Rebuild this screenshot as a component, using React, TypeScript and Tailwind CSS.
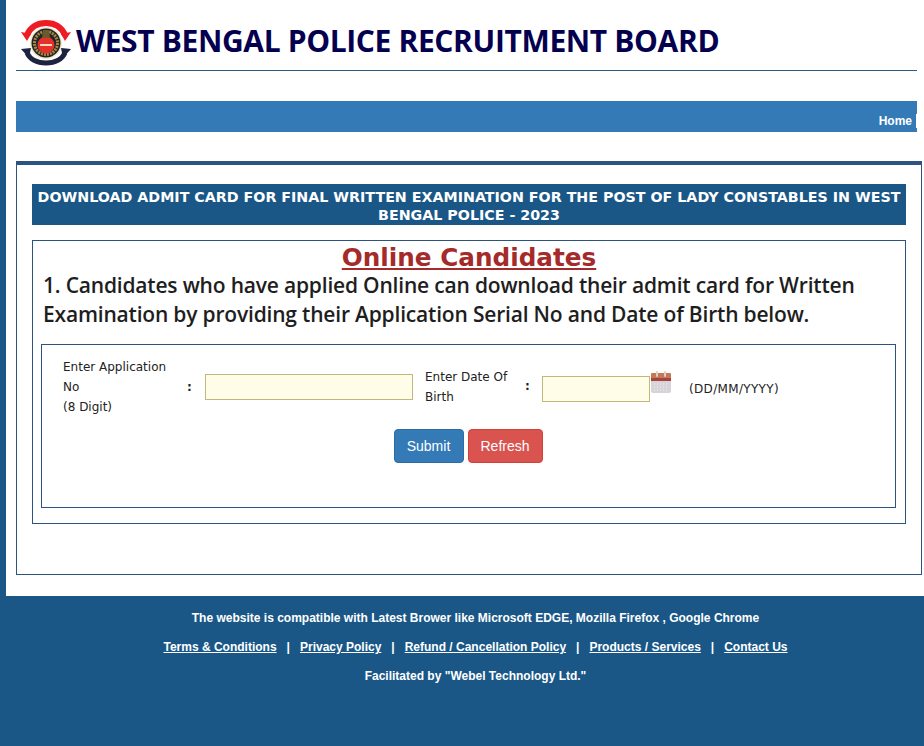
import React from 'react'

const Logo = () => (
  <svg width="54" height="48" viewBox="0 0 54 48" className="shrink-0">
    {/* red ribbon with arrow heads */}
    <path d="M7 17 C11 8 18 5 26 5 C34 5 41 8 45 17" fill="none" stroke="#ee1c25" strokeWidth="6" />
    <path d="M1 14 L11 16 L7 23 Z" fill="#ee1c25" />
    <path d="M51 14 L41 16 L45 23 Z" fill="#ee1c25" />
    {/* dark ribbon with arrow heads */}
    <path d="M7 35 C11 43 18 45 26 45 C34 45 41 43 45 35" fill="none" stroke="#1d2440" strokeWidth="5" />
    <path d="M1 31 L11 30 L9 40 Z" fill="#1d2440" />
    <path d="M51 31 L41 30 L43 40 Z" fill="#1d2440" />
    <circle cx="26" cy="25" r="16" fill="#f4e7c4" />
    <circle cx="26" cy="25" r="14.5" fill="#23232e" />
    <circle cx="26" cy="25" r="11.5" fill="none" stroke="#a98a3a" strokeWidth="3" strokeDasharray="2 1" />
    <circle cx="26" cy="27" r="8.5" fill="#e8302a" />
    <path d="M23 12 h6 l1 8 h-8 z" fill="#6b5a2c" />
    <rect x="20" y="26" width="12" height="2" fill="#f6d9c0" />
  </svg>
)

const CalendarIcon = () => (
  <svg width="22" height="23" viewBox="0 0 22 23" className="shrink-0">
    <rect x="1" y="2" width="20" height="20" rx="2" fill="#d6d4d6" />
    <rect x="1" y="2" width="20" height="8" rx="1" fill="#c77755" />
    <rect x="1" y="7" width="20" height="3" fill="#a5443f" />
    <rect x="6" y="0" width="2" height="6" rx="1" fill="#d8d0c4" />
    <rect x="14" y="0" width="2" height="6" rx="1" fill="#d8d0c4" />
    <path d="M4 13h14M4 16h14M4 19h14" stroke="#f2f2f2" strokeWidth="1" strokeDasharray="1 2" />
  </svg>
)

const footerLinks = [
  'Terms & Conditions',
  'Privacy Policy',
  'Refund / Cancellation Policy',
  'Products / Services',
  'Contact Us',
]

const App = () => {
  return (
    <div className="w-[924px] h-[746px] overflow-hidden bg-white font-['Liberation_Sans',sans-serif]">
      <div className="h-[596px] border-l-[6px] border-[#1a5787] pl-2.5 overflow-hidden">
        {/* Header */}
        <div className="w-[901px] h-[71px] border-b border-[#2b5a82] pt-[18px] flex items-start pl-[4px]">
          <Logo />
          <h1 className="ml-[2px] mt-[3px] text-[30px] leading-[40px] tracking-[-0.36px] font-bold text-[#04004f] whitespace-nowrap font-['Open_Sans',sans-serif]">
            WEST BENGAL POLICE RECRUITMENT BOARD
          </h1>
        </div>

        {/* Nav */}
        <div className="w-[901px] h-[31px] mt-[30px] bg-[#337ab7] flex items-end justify-end pb-[4px]">
          <a className="block text-xs leading-[14px] font-bold text-white pr-[4px] border-r border-white">Home</a>
        </div>

        {/* Main panel */}
        <div className="w-[906px] h-[414px] mt-[29px] border border-t-4 border-[#2b5480] px-[15px] pt-[19px]">
          <div className="w-[874px] h-[41px] bg-[#1a5787] text-center font-bold text-white text-[14.25px] leading-[18px] pt-[4px] font-['DejaVu_Sans',sans-serif]">
            DOWNLOAD ADMIT CARD FOR FINAL WRITTEN EXAMINATION FOR THE POST OF LADY CONSTABLES IN WEST BENGAL POLICE - 2023
          </div>

          <div className="w-[874px] h-[284px] mt-[15px] border border-[#2b5480] px-2">
            <h2 className="mt-[2px] text-center text-[24.7px] leading-[30px] font-bold text-[#a52a2a] underline font-['DejaVu_Sans',sans-serif]">
              Online Candidates
            </h2>
            <p className="-mt-[2px] pl-[2px] text-[21px] leading-[29px] tracking-[-0.19px] font-semibold text-[#1e1e1e] font-['Open_Sans',sans-serif]">
              1. Candidates who have applied Online can download their admit card for Written Examination by providing their Application Serial No and Date of Birth below.
            </p>

            <div className="w-[855px] h-[164px] mt-[15px] border border-[#2b5480] text-[12px] leading-[20px] text-[#222] font-['DejaVu_Sans',sans-serif]">
              <div className="flex items-center pt-[12px] pl-[21px]">
                <div className="w-[124px]">
                  Enter Application<br />No<br />(8 Digit)
                </div>
                <span className="w-[18px] font-bold">:</span>
                <input className="w-[208px] h-[26px] bg-[#fffde8] bg-[radial-gradient(#ece8cf_0.6px,transparent_0.7px)] bg-[length:6px_6px] border border-[#c2b77c]" />
                <div className="w-[100px] ml-[12px]">
                  Enter Date Of<br />Birth
                </div>
                <span className="w-[17px] -mt-[2px] font-bold">:</span>
                <input className="w-[108px] h-[26px] mt-[3px] bg-[#fffde8] bg-[radial-gradient(#ece8cf_0.6px,transparent_0.7px)] bg-[length:6px_6px] border border-[#c2b77c]" />
                <div className="-mt-[9px]">
                  <CalendarIcon />
                </div>
                <span className="ml-[17px] mt-[4px] tracking-[0.33px]">(DD/MM/YYYY)</span>
              </div>
              <div className="flex justify-center gap-1 mt-[12px] -ml-[1px]">
                <button className="w-[70px] h-[34px] rounded bg-[#337ab7] border border-[#2e6da4] text-white text-sm font-['Liberation_Sans',sans-serif]">
                  Submit
                </button>
                <button className="w-[75px] h-[34px] rounded bg-[#d9534f] border border-[#d43f3a] text-white text-sm font-['Liberation_Sans',sans-serif]">
                  Refresh
                </button>
              </div>
            </div>
          </div>
        </div>
      </div>

      {/* Footer */}
      <div className="h-[150px] bg-[#1a5787] text-white text-xs font-bold text-center pt-[14px] pl-[27px]">
        <p className="leading-[16px]">The website is compatible with Latest Brower like Microsoft EDGE, Mozilla Firefox , Google Chrome</p>
        <p className="mt-[13px] leading-[16px] flex justify-center">
          {footerLinks.map((link, i) => (
            <span key={link}>
              {i > 0 && <span className="mx-[10px]">|</span>}
              <a className="underline">{link}</a>
            </span>
          ))}
        </p>
        <p className="mt-[13px] leading-[16px]">Facilitated by "Webel Technology Ltd."</p>
      </div>
    </div>
  )
}

export default App
